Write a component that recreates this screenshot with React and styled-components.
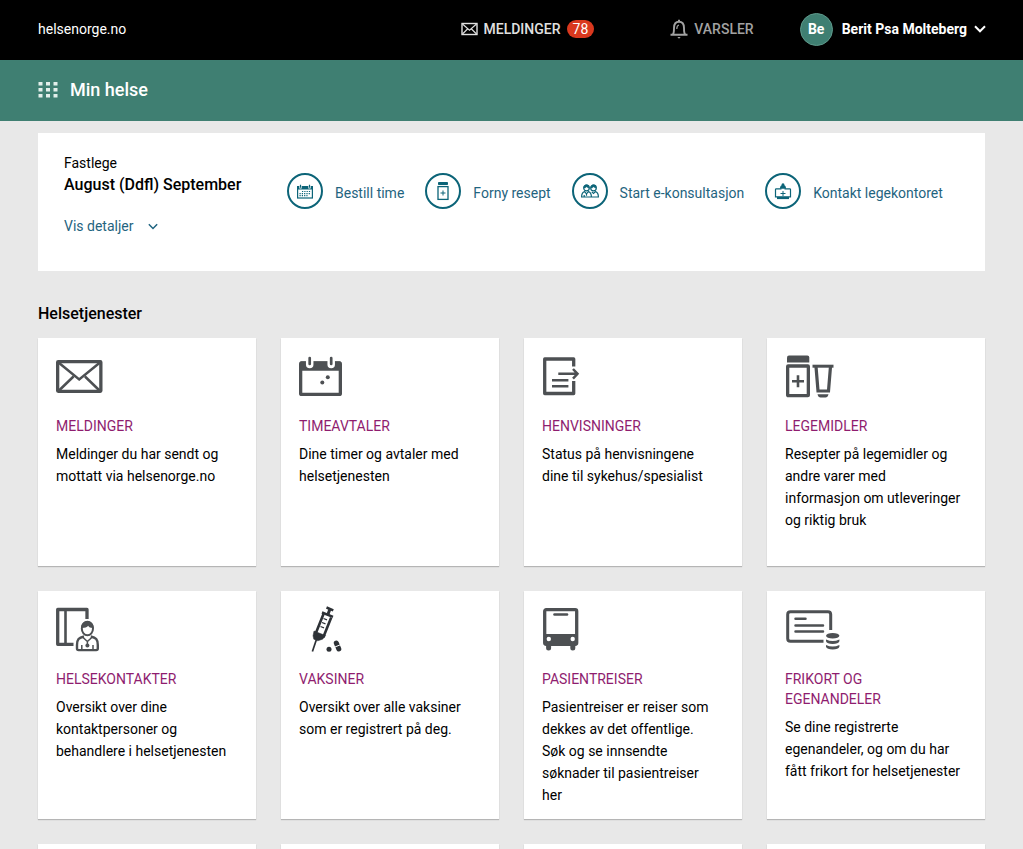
import styled, { createGlobalStyle } from "styled-components";

const GlobalStyle = createGlobalStyle`
  * {
    box-sizing: border-box;
  }
  body {
    margin: 0;
    background-color: #e8e8e8;
    color: #000;
    font-family: Roboto, "Liberation Sans", sans-serif;
    font-size: 14px;
    line-height: 22px;
  }
  a {
    color: inherit;
    text-decoration: none;
  }
  button {
    border: 0;
    padding: 0;
    background: none;
    color: inherit;
    font: inherit;
    cursor: pointer;
  }
`;

/* header icons */

const MailIcon = () => (
  <svg width="17" height="14" viewBox="0 0 17 14" fill="none" stroke="#e0e0e0">
    <rect x="1" y="1.5" width="15" height="11" strokeWidth="1.4" />
    <path d="M1.5 2l7 6.2 7-6.2M1.5 12l5-5M15.5 12l-5-5" strokeWidth="1.1" />
  </svg>
);

const BellIcon = () => (
  <svg width="18" height="20" viewBox="0 0 18 20" fill="none" stroke="#a2a2a2">
    <path
      d="M.5 15.8h17M2.8 15.5C4 14.3 4 12.500 4 9c0-4 1.800-6.200 5-6.200S14 5 14 9c0 3.500 0 5.300 1.200 6.500"
      strokeWidth="1.9"
    />
    <path d="M6.8 10c0-2.500.6-3.600 2.200-4" strokeWidth="1.2" />
    <path d="M9 2.500V.8" strokeWidth="2" />
    <path d="M7.300 18h3.400L9 19.800z" fill="#a2a2a2" stroke="none" />
  </svg>
);

const ChevronDown = ({ width, height, strokeWidth }) => (
  <svg width={width} height={height} viewBox="0 0 12 8" fill="none" stroke="currentColor" strokeWidth={strokeWidth}>
    <path d="M1 1.3l5 5 5-5" />
  </svg>
);

const GridIcon = () => (
  <svg width="20" height="16" viewBox="0 0 20 16" fill="#e3efeb">
    {[0, 6, 12].map((y) =>
      [0, 7.5, 15].map((x) => <rect key={`${x}-${y}`} x={x + 0.5} y={y} width="4" height="3.5" />)
    )}
  </svg>
);

/* small round icons */

const BookIcon = () => (
  <svg width="20" height="20" viewBox="0 0 20 20" fill="none" stroke="#0c6478">
    <rect x="2.6" y="5.6" width="14.8" height="11.4" strokeWidth="1.2" />
    <path d="M2.5 7h15" strokeWidth="3" />
    <path d="M5.5 4v3.5M14.5 4v3.5" stroke="#fff" strokeWidth="2.4" />
    <path d="M5.5 3.8v3M14.5 3.8v3" strokeWidth="1.2" />
    <path d="M7 10.5h9M4.5 12.6h11M4.5 14.7h8" strokeWidth="1.2" strokeDasharray="1.2 1.1" />
  </svg>
);

const BottleIcon = () => (
  <svg width="20" height="20" viewBox="0 0 20 20" fill="none" stroke="#0c6478">
    <rect x="5" y="1" width="10" height="3" rx="0.8" fill="#0c6478" stroke="none" />
    <rect x="5" y="5.6" width="10" height="12.8" strokeWidth="1.3" />
    <path d="M7.5 12h5M10 9.5v5" />
  </svg>
);

const PeopleIcon = () => (
  <svg width="20" height="20" viewBox="0 0 20 20" fill="none" stroke="#0c6478" strokeWidth="1.2">
    <circle cx="6.5" cy="7" r="2.8" />
    <circle cx="13.5" cy="7" r="2.8" />
    <path
      d="M3.8 7c.2-4.500 5.200-4.500 5.400 0-1.500-.2-2-.6-2.500-1.300C6 6.600 5 7 3.800 7zM10.800 7c.2-4.500 5.200-4.500 5.400 0-1.500-.2-2-.6-2.500-1.300C13 6.600 12 7 10.800 7z"
      fill="#0c6478"
      strokeWidth="0.5"
    />
    <path d="M1.6 16c0-3.300.9-4.800 3-5.400l1.900 2.200 1.900-2.200c2.100.6 3 2.100 3 5.400zM11.800 10.900l1.700 1.600 1.900-1.900c2.100.6 3 2.100 3 5.400h-6.800M6.500 12.800v2M4.200 14v2" />
  </svg>
);

const OfficeIcon = () => (
  <svg width="20" height="20" viewBox="0 0 20 20" fill="none" stroke="#0c6478">
    <path d="M8.500 7.800H3.300c-.5 0-.8.3-.8.8v7.200h15V8.600c0-.5-.3-.8-.8-.8h-5.200" strokeWidth="1.2" />
    <path d="M4 17h12" strokeWidth="2.2" />
    <path d="M10 10v5M7.500 12.500h5" />
    <path d="M10 2.200c1 0 1.600.8 1.400 2 1.200.6 1.600 1.800 1.600 3.600H7c0-1.800.4-3 1.600-3.600-.2-1.200.4-2 1.400-2z" fill="#0c6478" stroke="none" />
  </svg>
);

/* card icons */

const CardSvg = ({ children }) => (
  <svg width="60" height="54" viewBox="0 0 60 54" fill="none" stroke="#4d5053" strokeWidth="3.3">
    {children}
  </svg>
);

const LetterIcon = () => (
  <CardSvg>
    <rect x="1.65" y="11.65" width="43.2" height="29.7" rx="0.5" />
    <path d="M2.5 12.5l20.7 17L44 12.5M2.5 41l15-14.5M44 41L29 26.5" strokeWidth="2.5" />
  </CardSvg>
);

const CalendarIcon = () => (
  <CardSvg>
    <rect x="1.65" y="13" width="39.7" height="31.4" rx="1" />
    <path d="M1.5 11.5h40v9.2h-40z" fill="#4d5053" stroke="none" />
    <path d="M10.7 6v8.5M32.2 6v8.5" stroke="#fff" strokeWidth="7.5" strokeLinecap="round" />
    <path d="M10.7 8v6M32.2 8v6" strokeWidth="2.7" strokeLinecap="round" />
    <circle cx="28.8" cy="27.3" r="2" fill="#4d5053" stroke="none" />
    <circle cx="23.3" cy="32.6" r="2" fill="#4d5053" stroke="none" />
  </CardSvg>
);

const ReferralIcon = () => (
  <CardSvg>
    <path d="M31.7 16.5V9h-29v34.5h29V31" strokeLinejoin="round" />
    <path d="M16.3 23.8H35M31 19l4.500 4.800-4.500 4.800" strokeWidth="2.5" />
    <path d="M10 30.2h16.400M10 36.200h16.400" strokeWidth="2.5" />
  </CardSvg>
);

const MedicineIcon = () => (
  <CardSvg>
    <path d="M2 12.500v-5q0-2 2-2h18.300q2 0 2 2v5z" fill="#4d5053" stroke="none" />
    <rect x="2.65" y="16" width="20.7" height="29.7" rx="0.5" />
    <path d="M7 31.300h12M13 25.300v12" strokeWidth="2.6" />
    <path d="M27.500 16.200h21" strokeWidth="3" />
    <path d="M31 16.500l2 24.500h10.500l2-24.500" strokeWidth="3.2" />
    <path d="M32.500 44.200h11q-.8 3.200-3 3.200h-5q-2.200 0-3-3.200z" fill="#4d5053" stroke="none" />
  </CardSvg>
);

const ContactsIcon = () => (
  <CardSvg>
    <path d="M31 16V6.500H1.700v34.800h15.800" strokeLinejoin="round" />
    <path d="M9.500 6.500V41" strokeWidth="2.6" />
    <ellipse cx="31.4" cy="25.5" rx="5.6" ry="6.8" strokeWidth="2" />
    <path d="M25 25c0-9 12.800-9 12.800 0-3 .2-4.800-.6-5.600-2.200-1.400 1.800-4 2.400-7.200 2.200z" fill="#4d5053" stroke="none" />
    <path
      d="M28 33.500c-5.200 1-7 3-7 8.500v3.500q0 1.600 1.600 1.600h17.600q1.600 0 1.600-1.600V42c0-5.500-1.800-7.500-7-8.500"
      strokeWidth="2.4"
    />
    <path d="M26.500 34l4.900 4.500 4.900-4.500M31.400 38v4M25.800 42v5M37 42v5" strokeWidth="1.5" />
    <circle cx="31.4" cy="42.5" r="2" fill="#4d5053" stroke="none" />
  </CardSvg>
);

const SyringeIcon = () => (
  <CardSvg>
    <g stroke="#2d3136">
      <path d="M27.500 4.500l6.800 2.800M23 9.500l11 4.400" strokeWidth="2.5" />
      <path d="M31 6l-2.300 6" strokeWidth="3" />
      <path d="M24.500 11l-8 20M32.200 14.500l-8 20" strokeWidth="2.6" />
      <path d="M15 28l11.600 4.600-3 3.600-4.800 1.600-4-1.600-.8-3.400z" fill="#2d3136" strokeWidth="0.5" />
      <path d="M17.600 36l-4.200 12.500" strokeWidth="1.7" />
      <path d="M24.500 15.500l3.500 1.400M23 19.500l3.500 1.400M21.500 23.500l3.500 1.400" strokeWidth="1.3" />
      <path d="M37.300 40l2.500 6" strokeWidth="5" strokeLinecap="round" />
    </g>
    <path d="M35.500 44.200l6-2.500" stroke="#fff" strokeWidth="1" />
    <circle cx="30" cy="46.2" r="2.5" fill="#2d3136" stroke="none" />
  </CardSvg>
);

const BusIcon = () => (
  <CardSvg>
    <rect x="2.7" y="6.7" width="32" height="34.6" rx="1.5" />
    <path d="M2 31h33.300v11H2z" fill="#4d5053" stroke="none" />
    <path d="M12.500 11.500H25" strokeWidth="2.6" strokeLinecap="round" />
    <path d="M6.600 42v3M30.800 42v3" strokeWidth="5" strokeLinecap="round" />
    <circle cx="6.8" cy="36" r="2.2" fill="#fff" stroke="none" />
    <circle cx="30.7" cy="36" r="2.2" fill="#fff" stroke="none" />
  </CardSvg>
);

const ExemptionIcon = () => (
  <CardSvg>
    <path d="M45.700 27V11.500q0-2.800-2.800-2.800H5.500q-2.800 0-2.800 2.800v24q0 2.800 2.800 2.800h33" strokeWidth="3" />
    <path d="M10.500 15.700h10M10.500 22.600H38M10.500 28.600H38" strokeWidth="2.5" strokeLinecap="round" />
    <ellipse cx="47.7" cy="32.8" rx="6.7" ry="2.8" fill="#4d5053" stroke="none" />
    <path
      d="M41 36.500q6.700 3 13.400 0v1.800q-1 2.700-6.700 2.700T41 38.300zM41 42q6.700 3 13.400 0v1.800q-1 2.700-6.700 2.700T41 43.800z"
      fill="#4d5053"
      stroke="none"
    />
  </CardSvg>
);

const actions = [
  { label: "Bestill time", icon: <BookIcon /> },
  { label: "Forny resept", icon: <BottleIcon /> },
  { label: "Start e-konsultasjon", icon: <PeopleIcon /> },
  { label: "Kontakt legekontoret", icon: <OfficeIcon /> },
];

const services = [
  { title: "Meldinger", text: "Meldinger du har sendt og mottatt via helsenorge.no", icon: <LetterIcon /> },
  { title: "Timeavtaler", text: "Dine timer og avtaler med helsetjenesten", icon: <CalendarIcon /> },
  { title: "Henvisninger", text: "Status på henvisningene dine til sykehus/spesialist", icon: <ReferralIcon /> },
  {
    title: "Legemidler",
    text: "Resepter på legemidler og andre varer med informasjon om utleveringer og riktig bruk",
    icon: <MedicineIcon />,
  },
  {
    title: "Helsekontakter",
    text: "Oversikt over dine kontaktpersoner og behandlere i helsetjenesten",
    icon: <ContactsIcon />,
  },
  { title: "Vaksiner", text: "Oversikt over alle vaksiner som er registrert på deg.", icon: <SyringeIcon /> },
  {
    title: "Pasientreiser",
    text: "Pasientreiser er reiser som dekkes av det offentlige. Søk og se innsendte søknader til pasientreiser her",
    icon: <BusIcon />,
  },
  {
    title: "Frikort og egenandeler",
    text: "Se dine registrerte egenandeler, og om du har fått frikort for helsetjenester",
    icon: <ExemptionIcon />,
  },
];

const ServiceCard = ({ title, text, icon }) => (
  <Card href="#">
    {icon}
    <CardTitle>{title}</CardTitle>
    <CardText>{text}</CardText>
  </Card>
);

const App = () => {
  return (
    <>
      <GlobalStyle />
      <Header>
        <a href="#">helsenorge.no</a>
        <HeaderNav>
          <HeaderLink href="#" color="#e0e0e0" $space="76px">
            <MailIcon />
            Meldinger
            <Badge>78</Badge>
          </HeaderLink>
          <HeaderLink href="#" color="#a2a2a2" $space="46px">
            <BellIcon />
            Varsler
          </HeaderLink>
          <UserButton type="button">
            <Avatar>Be</Avatar>
            <UserName>
              Berit Psa Molteberg
              <ChevronDown width="12" height="8" strokeWidth="2" />
            </UserName>
          </UserButton>
        </HeaderNav>
      </Header>
      <TitleBar>
        <GridIcon />
        <PageTitle>Min helse</PageTitle>
      </TitleBar>
      <Main>
        <Panel>
          <Doctor>
            <div>Fastlege</div>
            <DoctorName>August (Ddfl) September</DoctorName>
            <DetailsButton type="button">
              Vis detaljer
              <ChevronDown width="10" height="7" strokeWidth="1.8" />
            </DetailsButton>
          </Doctor>
          <Actions>
            {actions.map(({ label, icon }) => (
              <Action key={label} href="#">
                <Circle>{icon}</Circle>
                <ActionLabel>{label}</ActionLabel>
              </Action>
            ))}
          </Actions>
        </Panel>
        <SectionTitle>Helsetjenester</SectionTitle>
        <Grid>
          {services.map((service) => (
            <ServiceCard key={service.title} {...service} />
          ))}
          {[1, 2, 3, 4].map((n) => (
            <EmptyCard key={n} />
          ))}
        </Grid>
      </Main>
    </>
  );
};
export default App;

const Header = styled.header`
  display: flex;
  align-items: center;
  justify-content: space-between;
  height: 60px;
  padding: 0 37px 2px 38px;
  background-color: #000;
  color: #fff;
`;

const HeaderNav = styled.nav`
  display: flex;
  align-items: center;
`;

const HeaderLink = styled.a`
  display: flex;
  align-items: center;
  column-gap: 6px;
  margin-right: ${({ $space }) => $space};
  color: ${({ color }) => color};
  font-weight: 500;
  text-transform: uppercase;
`;

const Badge = styled.span`
  padding: 0 6px;
  border-radius: 10px;
  background-color: #d9381e;
  color: #fff;
  font-weight: 400;
  line-height: 18px;
`;

const UserButton = styled.button`
  display: flex;
  align-items: center;
  column-gap: 9px;
`;

const Avatar = styled.span`
  width: 33px;
  height: 33px;
  border: 1px solid #5f9a8c;
  border-radius: 50%;
  background-color: #3f7f72;
  font-weight: 700;
  line-height: 31px;
`;

const UserName = styled.span`
  display: flex;
  align-items: center;
  column-gap: 7px;
  font-weight: 700;
`;

const TitleBar = styled.div`
  display: flex;
  align-items: center;
  column-gap: 12px;
  height: 61px;
  padding: 0 38px 2px;
  background-color: #3f7f72;
  color: #fff;
`;

const PageTitle = styled.h1`
  margin: 0;
  font-size: 18px;
  font-weight: 500;
`;

const Main = styled.main`
  padding: 12px 38px;
`;

const Panel = styled.section`
  display: flex;
  align-items: flex-start;
  padding: 19px 26px 34px;
  background-color: #fff;
`;

const Doctor = styled.div`
  flex: 0 0 223px;
`;

const DoctorName = styled.div`
  font-size: 16px;
  font-weight: 500;
`;

const DetailsButton = styled.button`
  display: flex;
  align-items: center;
  column-gap: 15px;
  margin-top: 19px;
  color: #1f6480;
`;

const Actions = styled.div`
  display: flex;
  flex-wrap: wrap;
  gap: 12px 21px;
  padding-top: 21px;
`;

const Action = styled.a`
  display: flex;
  align-items: center;
  column-gap: 12px;
`;

const Circle = styled.span`
  display: flex;
  align-items: center;
  justify-content: center;
  width: 36px;
  height: 36px;
  border: 2px solid #0c6478;
  border-radius: 50%;
`;

const ActionLabel = styled.span`
  padding-top: 3px;
  color: #1f6480;
`;

const SectionTitle = styled.h2`
  margin: 32px 0 13px;
  font-size: 16px;
  font-weight: 500;
  line-height: 22px;
`;

const Grid = styled.div`
  display: grid;
  grid-template-columns: repeat(4, 1fr);
  grid-auto-rows: minmax(228px, auto);
  gap: 25px;
`;

const Card = styled.a`
  padding: 12px 23px 12px 18px;
  background-color: #fff;
  box-shadow: 0 1px 1px rgba(0, 0, 0, 0.22);

  svg {
    display: block;
    margin-bottom: 12px;
  }
`;

const EmptyCard = styled.div`
  background-color: #fff;
  box-shadow: 0 1px 1px rgba(0, 0, 0, 0.22);
`;

const CardTitle = styled.h3`
  margin: 0 0 7px;
  padding-right: 12px;
  color: #8f1d6f;
  font-size: 14px;
  font-weight: 400;
  line-height: 20px;
  text-transform: uppercase;
`;

const CardText = styled.p`
  margin: 0;
`;
